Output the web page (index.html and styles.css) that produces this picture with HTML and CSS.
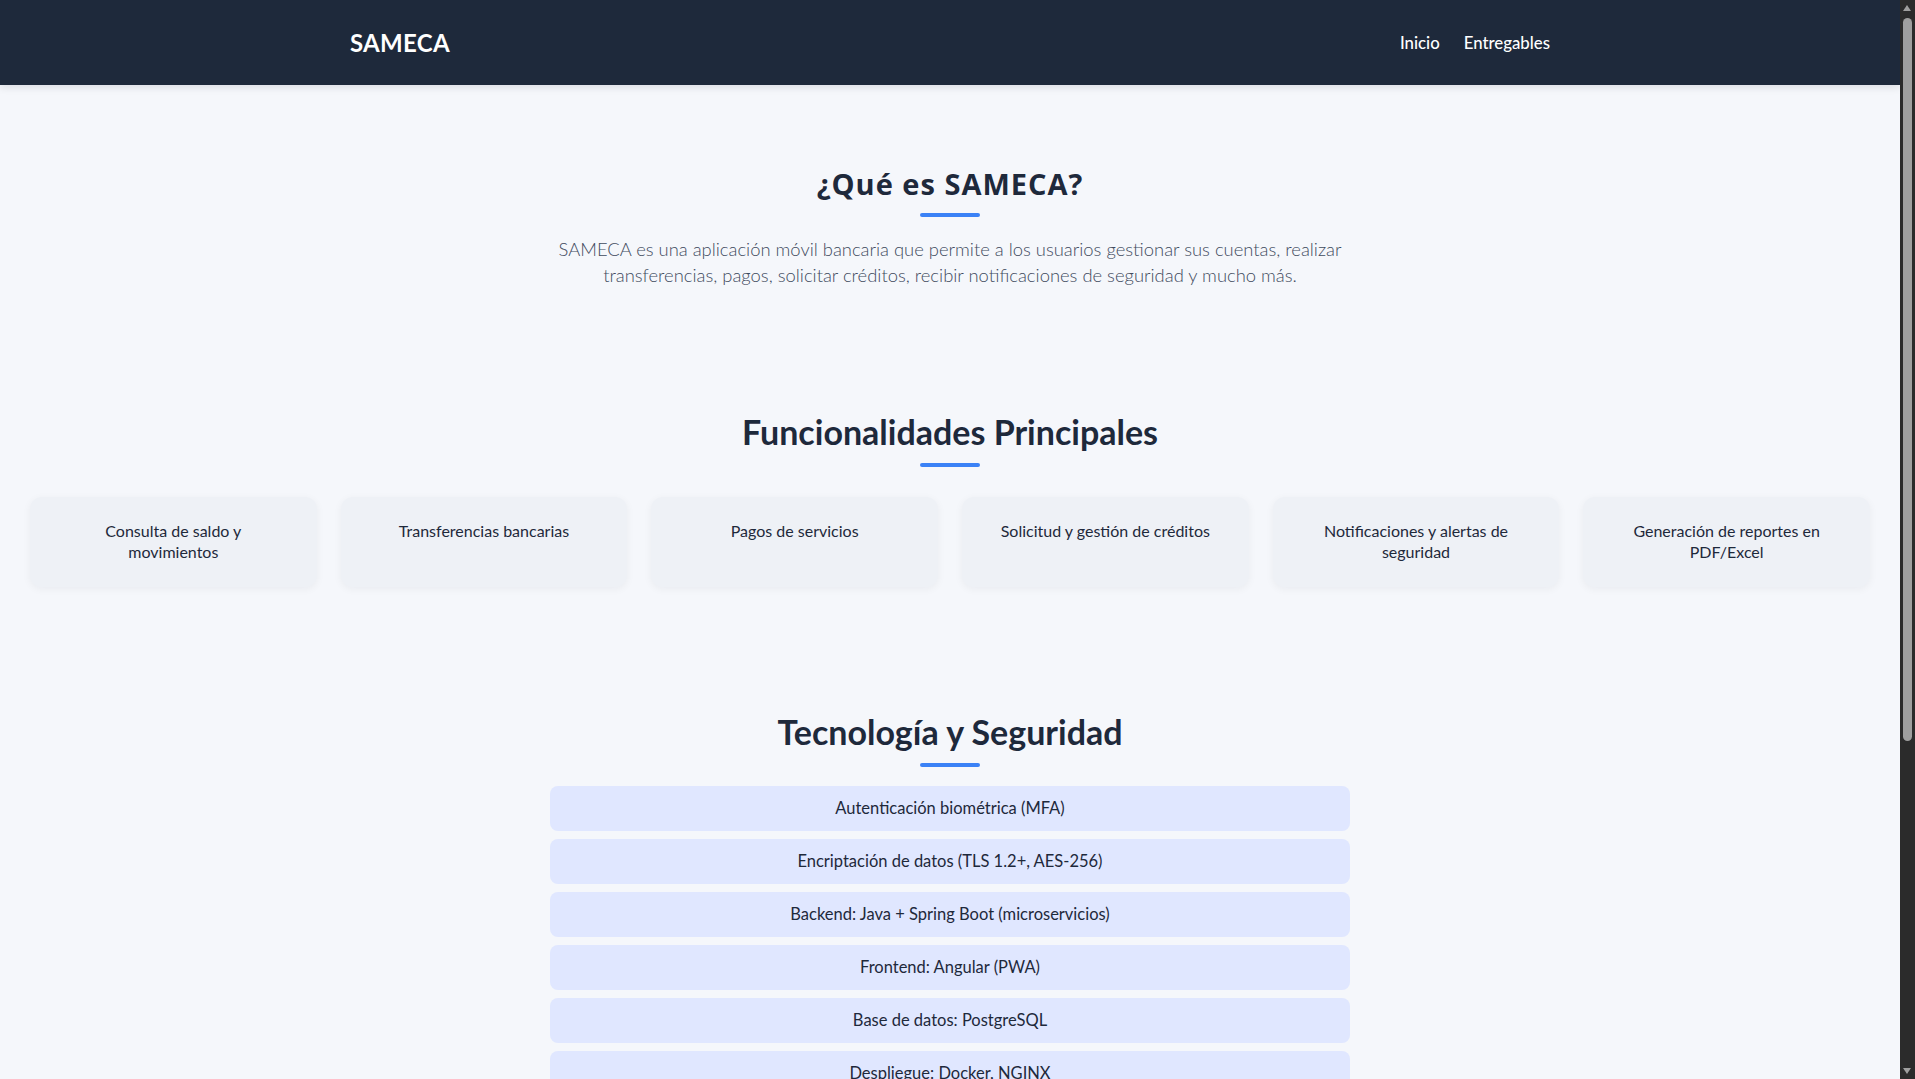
FILE: index.html
```html
<!DOCTYPE html>
<html lang="es">
<head>
<meta charset="utf-8">
<title>SAMECA</title>
<link rel="stylesheet" href="styles.css">
</head>
<body>
<header class="site-header">
  <div class="container header-inner">
    <div class="logo">SAMECA</div>
    <nav class="nav">
      <a href="#" class="nav-link">Inicio</a>
      <a href="#" class="nav-link">Entregables</a>
    </nav>
  </div>
</header>
<main>
  <section class="intro">
    <h2 class="section-title section-title--small">¿Qué es SAMECA?</h2>
    <p class="lead">SAMECA es una aplicación móvil bancaria que permite a los usuarios gestionar sus cuentas, realizar transferencias, pagos, solicitar créditos, recibir notificaciones de seguridad y mucho más.</p>
  </section>
  <section class="features">
    <h2 class="section-title">Funcionalidades Principales</h2>
    <div class="feature-grid">
      <div class="feature-card">Consulta de saldo y movimientos</div>
      <div class="feature-card">Transferencias bancarias</div>
      <div class="feature-card">Pagos de servicios</div>
      <div class="feature-card">Solicitud y gestión de créditos</div>
      <div class="feature-card">Notificaciones y alertas de seguridad</div>
      <div class="feature-card">Generación de reportes en PDF/Excel</div>
    </div>
  </section>
  <section class="tech">
    <h2 class="section-title">Tecnología y Seguridad</h2>
    <ul class="tech-list">
      <li class="tech-item">Autenticación biométrica (MFA)</li>
      <li class="tech-item">Encriptación de datos (TLS 1.2+, AES-256)</li>
      <li class="tech-item">Backend: Java + Spring Boot (microservicios)</li>
      <li class="tech-item">Frontend: Angular (PWA)</li>
      <li class="tech-item">Base de datos: PostgreSQL</li>
      <li class="tech-item">Despliegue: Docker, NGINX</li>
    </ul>
  </section>
</main>
<div class="scrollbar" aria-hidden="true">
  <span class="scrollbar-arrow scrollbar-arrow--up"></span>
  <span class="scrollbar-thumb"></span>
  <span class="scrollbar-arrow scrollbar-arrow--down"></span>
</div>
</body>
</html>
```
FILE: styles.css
```css
* { box-sizing: border-box; }

body {
  margin: 0 15px 0 0;
  font-family: Lato, "Open Sans", sans-serif;
  background: #f5f7fb;
  color: #1e293b;
}

/* browser-style scrollbar drawn over the right edge */
.scrollbar {
  position: fixed;
  top: 0;
  right: 0;
  width: 15px;
  height: 100vh;
  background: #2b2b2b;
  z-index: 10;
}

.scrollbar-thumb {
  position: absolute;
  left: 3px;
  right: 3px;
  top: 18px;
  height: 723px;
  background: #9f9f9f;
  border-radius: 5px;
}

.scrollbar-arrow {
  position: absolute;
  left: 3px;
  width: 0;
  height: 0;
  border-left: 4.5px solid transparent;
  border-right: 4.5px solid transparent;
}

.scrollbar-arrow--up {
  top: 5px;
  border-bottom: 6px solid #9f9f9f;
}

.scrollbar-arrow--down {
  bottom: 5px;
  border-top: 6px solid #9f9f9f;
}

.container {
  max-width: 1200px;
  margin: 0 auto;
}

.site-header {
  background: #1e293b;
  height: 85px;
  box-shadow: 0 2px 8px rgba(15, 23, 42, 0.12);
  position: relative;
  z-index: 1;
}

.header-inner {
  height: 100%;
  display: flex;
  align-items: center;
  justify-content: space-between;
}

.logo {
  color: #ffffff;
  font-size: 24px;
  font-weight: 700;
  letter-spacing: 0.3px;
}

.nav {
  display: flex;
  gap: 24px;
}

.nav-link {
  color: #ffffff;
  text-decoration: none;
  font-size: 16.8px;
  font-weight: 500;
}

.section-title {
  margin: 0;
  text-align: center;
  font-size: 34px;
  line-height: 38.4px;
  font-weight: 700;
  color: #1e293b;
}

.section-title::after {
  content: "";
  display: block;
  width: 60px;
  height: 4px;
  border-radius: 2px;
  background: #3b82f6;
  margin: 11px auto 0;
}

.section-title--small {
  font-family: "Open Sans", Lato, sans-serif;
  font-size: 29px;
  line-height: 31.2px;
  letter-spacing: 1px;
}

.section-title--small::after {
  margin-top: 14px;
}

.intro {
  padding: 83px 0 62px;
  text-align: center;
}

.lead {
  max-width: 800px;
  margin: 20px auto 0;
  font-size: 18.4px;
  line-height: 25.5px;
  font-weight: 300;
  color: #3f4b5e;
}

.features {
  padding: 63px 30px;
}

.feature-grid {
  margin-top: 30.5px;
  display: grid;
  grid-template-columns: repeat(6, 1fr);
  gap: 24px;
}

.feature-card {
  background: #eef1f6;
  border-radius: 12px;
  padding: 24px 30px;
  min-height: 90px;
  text-align: center;
  font-size: 16px;
  line-height: 1.3;
  color: #1e293b;
  box-shadow: 0 2px 8px rgba(15, 23, 42, 0.05);
}

.tech {
  padding: 63px 0 64px;
}

.tech-list {
  list-style: none;
  margin: 19px auto 0;
  padding: 0;
  max-width: 800px;
  display: flex;
  flex-direction: column;
  gap: 8px;
}

.tech-item {
  background: #e0e7ff;
  border-radius: 8px;
  padding: 12px 16px;
  text-align: center;
  font-size: 16.5px;
  line-height: 21px;
  color: #1e293b;
}
```
